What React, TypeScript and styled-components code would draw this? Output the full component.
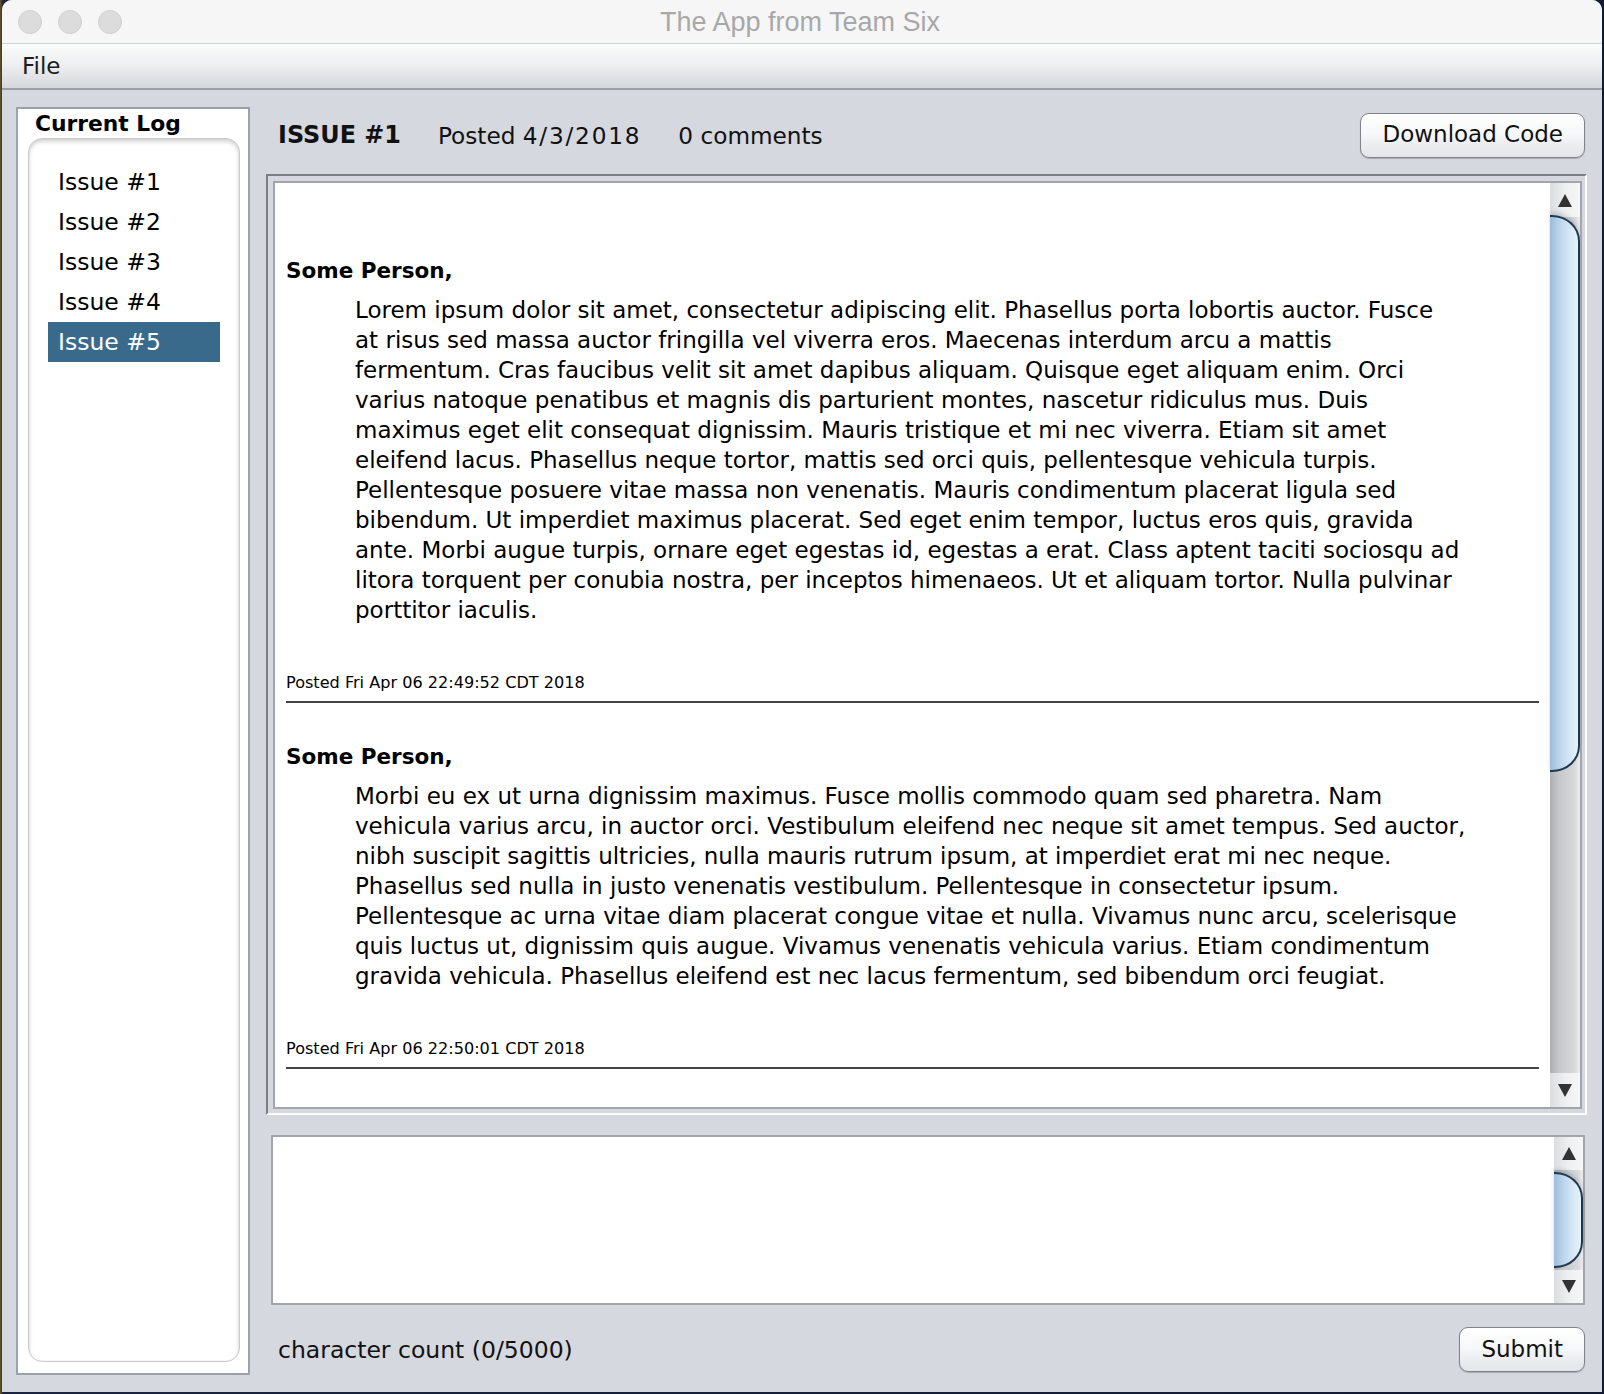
import React from "react";
import styled, { createGlobalStyle } from "styled-components";

const UI = `"DejaVu Sans", "Lucida Grande", Verdana, sans-serif`;

const GlobalStyle = createGlobalStyle`
  html, body { margin: 0; padding: 0; }
  body { background: #151d33; font-family: ${UI}; }
  * { box-sizing: border-box; }
`;

const Desktop = styled.div`
  width: 1604px;
  height: 1394px;
  padding-left: 2px;
  background: linear-gradient(90deg, #6a5526 0px, #1b2440 3px, #111a31 100%);
  overflow: hidden;
`;

const Window = styled.div`
  width: 1600px;
  height: 1392px;
  display: flex;
  flex-direction: column;
  background: #d5d8de;
  border-radius: 10px 10px 0 0;
  overflow: hidden;
`;

const TitleBar = styled.div`
  height: 44px;
  flex: none;
  display: grid;
  grid-template-columns: 1fr auto 1fr;
  align-items: center;
  padding: 0 20px 0 16px;
  background: #f6f6f6;
  border-bottom: 1px solid #d2d2d2;
`;

const Lights = styled.div`
  display: flex;
  gap: 16px;
`;

const Light = styled.span`
  width: 24px;
  height: 24px;
  border-radius: 50%;
  background: #dcdcdc;
  border: 1px solid #cfcfcf;
`;

const WindowTitle = styled.div`
  font-family: "Liberation Sans", Arial, sans-serif;
  font-size: 27px;
  color: #a8a8a8;
  padding-top: 2px;
`;

const MenuBar = styled.div`
  height: 46px;
  flex: none;
  display: flex;
  align-items: center;
  padding-left: 20px;
  background: linear-gradient(180deg, #fafbfb 0%, #eef0f1 45%, #d5d7db 100%);
  border-bottom: 2px solid #9a9ea6;
`;

const MenuItem = styled.span`
  font-size: 23px;
  color: #1c1c1c;
`;

const Body = styled.div`
  flex: 1;
  display: flex;
  gap: 16px;
  padding: 17px 0 0 14px;
`;

const Sidebar = styled.div`
  width: 234px;
  height: 1268px;
  flex: none;
  display: flex;
  flex-direction: column;
  background: #fff;
  border: 2px solid #9da1a9;
  padding: 0 8px 11px 10px;
`;

const SidebarTitle = styled.div`
  height: 29px;
  line-height: 29px;
  padding-left: 7px;
  font-size: 21.8px;
  font-weight: bold;
  color: #000;
`;

const ListBox = styled.div`
  flex: 1;
  padding: 23px 0 0 19px;
  border: 1px solid #cbcbcb;
  border-radius: 14px;
  box-shadow: inset 0 3px 4px rgba(0, 0, 0, 0.16), inset 0 0 2px rgba(0, 0, 0, 0.12);
`;

const ListItem = styled.div<{ $selected?: boolean }>`
  width: 172px;
  height: 40px;
  line-height: 40px;
  padding-left: 10px;
  font-size: 23.5px;
  color: ${(p) => (p.$selected ? "#ffffff" : "#000000")};
  background: ${(p) => (p.$selected ? "#3a6a8b" : "transparent")};
`;

const MainColumn = styled.div`
  width: 1321px;
  flex: none;
  display: flex;
  flex-direction: column;
`;

const Header = styled.div`
  height: 56px;
  display: flex;
  align-items: center;
  gap: 37px;
  padding: 0 2px 0 12px;
`;

const IssueTitle = styled.span`
  font-size: 23.9px;
  font-weight: bold;
  color: #111;
`;

const Meta = styled.span`
  font-size: 23.2px;
  color: #111;
`;

const Digits = styled.span`
  letter-spacing: 1.8px;
`;

const AquaButton = styled.button<{ $push?: boolean }>`
  margin-left: ${(p) => (p.$push ? "auto" : "0")};
  height: 45px;
  padding: 0 21px 2px;
  font-family: ${UI};
  font-size: 23px;
  color: #111;
  border: 1.5px solid #7f8389;
  border-radius: 9px;
  background: linear-gradient(180deg, #ffffff 0%, #f7f8f9 45%, #eceef1 70%, #e2e5e9 100%);
  box-shadow: 0 1px 1px rgba(0, 0, 0, 0.2);
`;

const Pane = styled.div`
  margin-top: 11px;
  height: 941px;
  display: flex;
  border-style: solid;
  border-width: 2px;
  border-color: #7c7f84 #ffffff #ffffff #7c7f84;
  padding: 5px 3px 4px 5px;
`;

const PaneInner = styled.div`
  flex: 1;
  display: flex;
  background: #fff;
  border: 2px solid #a2a5ab;
  overflow: hidden;
`;

const Content = styled.div`
  flex: 1;
  padding: 73px 11px 0 11px;
  overflow: hidden;
  color: #000;
`;

const Comment = styled.div`
  & + & { margin-top: 39px; }
`;

const Author = styled.div`
  height: 30px;
  line-height: 30px;
  font-size: 21.5px;
  font-weight: bold;
`;

const Paragraph = styled.div`
  margin-top: 9px;
  padding-left: 69px;
  font-size: 23px;
  line-height: 30px;
`;

const Line = styled.div`
  white-space: pre;
`;

const Stamp = styled.div`
  margin-top: 48px;
  font-size: 16.1px;
  line-height: 20px;
`;

const Rule = styled.div`
  margin-top: 8px;
  height: 2px;
  background: #434343;
`;

const ScrollBar = styled.div<{ $w: number }>`
  width: ${(p) => p.$w}px;
  flex: none;
  display: flex;
  flex-direction: column;
  background: linear-gradient(90deg, #adafb3 0%, #c5c7cb 30%, #d6d8db 80%, #ececee 100%);
`;

const ArrowButton = styled.div<{ $h: number }>`
  height: ${(p) => p.$h}px;
  flex: none;
  display: flex;
  align-items: center;
  justify-content: center;
  background: linear-gradient(90deg, #dcdde0 0%, #eeeff0 50%, #f7f7f8 100%);
`;

const Track = styled.div`
  flex: 1;
  display: flex;
  flex-direction: column;
`;

const Thumb = styled.div<{ $top: number; $h: number }>`
  margin-top: ${(p) => p.$top}px;
  height: ${(p) => p.$h}px;
  background: linear-gradient(90deg, #9dbcd9 0%, #bcd6ec 35%, #d5e7f5 70%, #e7f2fb 100%);
  border: 2px solid #1f3851;
  border-left: none;
  border-radius: 0 28px 28px 0 / 0 26px 26px 0;
  box-shadow: 0 -3px 4px rgba(0, 0, 0, 0.15);
`;

const TextBox = styled.div`
  margin: 20px 2px 0 5px;
  height: 170px;
  display: flex;
  justify-content: flex-end;
  background: #fff;
  border: 2px solid #a2a5ab;
`;

const Footer = styled.div`
  padding: 22px 2px 0 12px;
  display: flex;
  align-items: center;
  justify-content: space-between;
`;

const CharCount = styled.span`
  font-size: 23.5px;
  color: #111;
`;

const Arrow = ({ up }: { up?: boolean }) => (
  <svg width="14" height="13" viewBox="0 0 14 13">
    <polygon points={up ? "7,0 14,13 0,13" : "0,0 14,0 7,13"} fill="#333" />
  </svg>
);

const Scroller = ({
  w,
  btn,
  top,
  h,
}: {
  w: number;
  btn: number;
  top: number;
  h: number;
}) => (
  <ScrollBar $w={w}>
    <ArrowButton $h={btn}>
      <Arrow up />
    </ArrowButton>
    <Track>
      <Thumb $top={top} $h={h} />
    </Track>
    <ArrowButton $h={btn}>
      <Arrow />
    </ArrowButton>
  </ScrollBar>
);

const comments = [
  {
    author: "Some Person,",
    lines: [
      "Lorem ipsum dolor sit amet, consectetur adipiscing elit. Phasellus porta lobortis auctor. Fusce",
      "at risus sed massa auctor fringilla vel viverra eros. Maecenas interdum arcu a mattis",
      "fermentum. Cras faucibus velit sit amet dapibus aliquam. Quisque eget aliquam enim. Orci",
      "varius natoque penatibus et magnis dis parturient montes, nascetur ridiculus mus. Duis",
      "maximus eget elit consequat dignissim. Mauris tristique et mi nec viverra. Etiam sit amet",
      "eleifend lacus. Phasellus neque tortor, mattis sed orci quis, pellentesque vehicula turpis.",
      "Pellentesque posuere vitae massa non venenatis. Mauris condimentum placerat ligula sed",
      "bibendum. Ut imperdiet maximus placerat. Sed eget enim tempor, luctus eros quis, gravida",
      "ante. Morbi augue turpis, ornare eget egestas id, egestas a erat. Class aptent taciti sociosqu ad",
      "litora torquent per conubia nostra, per inceptos himenaeos. Ut et aliquam tortor. Nulla pulvinar",
      "porttitor iaculis.",
    ],
    stamp: "Posted Fri Apr 06 22:49:52 CDT 2018",
  },
  {
    author: "Some Person,",
    lines: [
      "Morbi eu ex ut urna dignissim maximus. Fusce mollis commodo quam sed pharetra. Nam",
      "vehicula varius arcu, in auctor orci. Vestibulum eleifend nec neque sit amet tempus. Sed auctor,",
      "nibh suscipit sagittis ultricies, nulla mauris rutrum ipsum, at imperdiet erat mi nec neque.",
      "Phasellus sed nulla in justo venenatis vestibulum. Pellentesque in consectetur ipsum.",
      "Pellentesque ac urna vitae diam placerat congue vitae et nulla. Vivamus nunc arcu, scelerisque",
      "quis luctus ut, dignissim quis augue. Vivamus venenatis vehicula varius. Etiam condimentum",
      "gravida vehicula. Phasellus eleifend est nec lacus fermentum, sed bibendum orci feugiat.",
    ],
    stamp: "Posted Fri Apr 06 22:50:01 CDT 2018",
  },
];

const issues = ["Issue #1", "Issue #2", "Issue #3", "Issue #4", "Issue #5"];

export default function App() {
  return (
    <>
      <GlobalStyle />
      <Desktop>
        <Window>
          <TitleBar>
            <Lights>
              <Light />
              <Light />
              <Light />
            </Lights>
            <WindowTitle>The App from Team Six</WindowTitle>
            <span />
          </TitleBar>
          <MenuBar>
            <MenuItem>File</MenuItem>
          </MenuBar>
          <Body>
            <Sidebar>
              <SidebarTitle>Current Log</SidebarTitle>
              <ListBox>
                {issues.map((t, i) => (
                  <ListItem key={t} $selected={i === 4}>
                    {t}
                  </ListItem>
                ))}
              </ListBox>
            </Sidebar>
            <MainColumn>
              <Header>
                <IssueTitle>ISSUE #1</IssueTitle>
                <Meta>
                  Posted <Digits>4/3/2018</Digits>
                </Meta>
                <Meta>0 comments</Meta>
                <AquaButton $push>Download Code</AquaButton>
              </Header>
              <Pane>
                <PaneInner>
                  <Content>
                    {comments.map((c, i) => (
                      <Comment key={i}>
                        <Author>{c.author}</Author>
                        <Paragraph>
                          {c.lines.map((l, j) => (
                            <Line key={j}>{l}</Line>
                          ))}
                        </Paragraph>
                        <Stamp>{c.stamp}</Stamp>
                        <Rule />
                      </Comment>
                    ))}
                  </Content>
                  <Scroller w={30} btn={34} top={-2} h={557} />
                </PaneInner>
              </Pane>
              <TextBox>
                <Scroller w={29} btn={33} top={2} h={96} />
              </TextBox>
              <Footer>
                <CharCount>character count (0/5000)</CharCount>
                <AquaButton>Submit</AquaButton>
              </Footer>
            </MainColumn>
          </Body>
        </Window>
      </Desktop>
    </>
  );
}
